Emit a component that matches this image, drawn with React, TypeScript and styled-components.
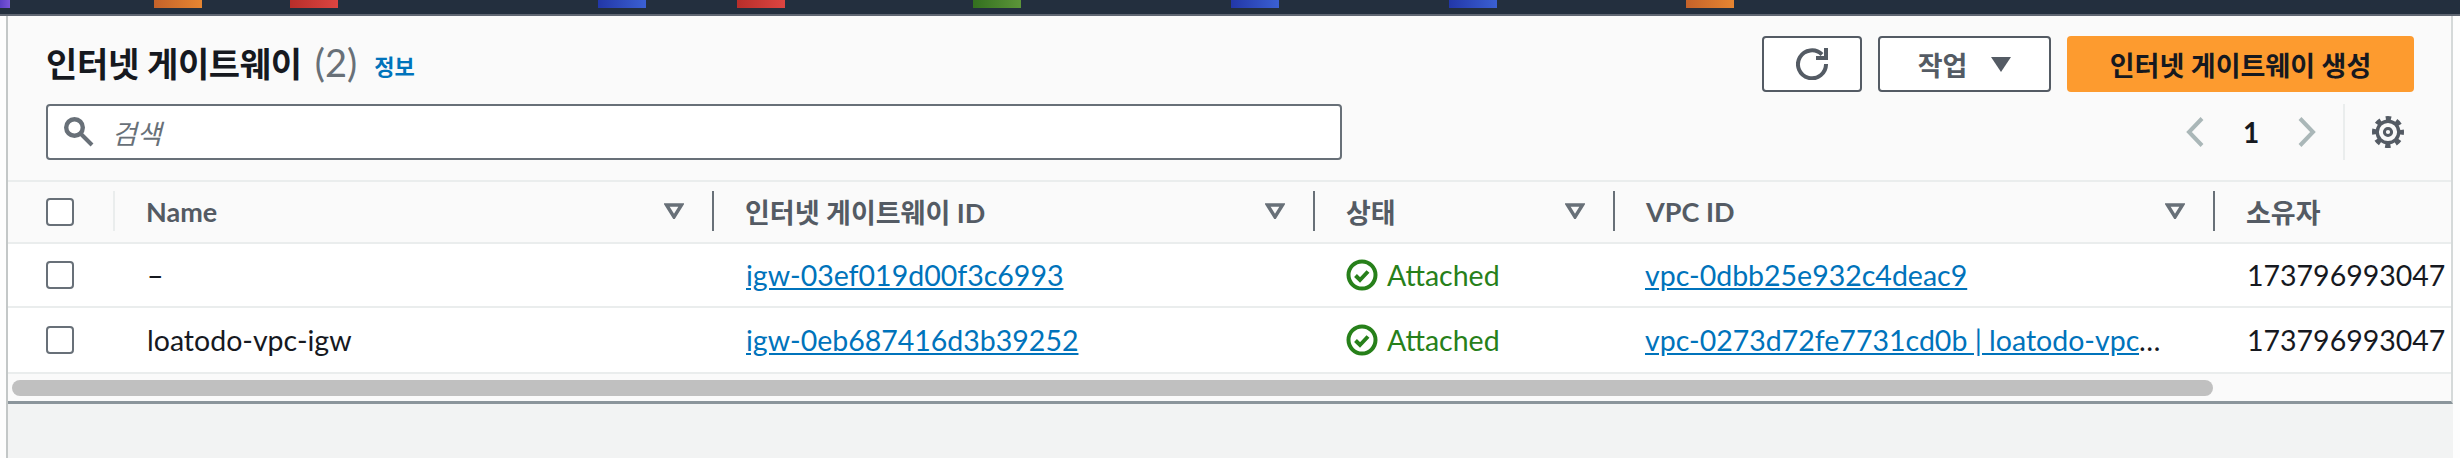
import { FC } from 'react'
import styled, { createGlobalStyle } from 'styled-components'

const GlobalStyle = createGlobalStyle`
  html, body {
    margin: 0;
    padding: 0;
    background: #fdfdfd;
  }
  body {
    font-family: 'Lato', 'Noto Sans CJK KR', sans-serif;
    color: #16191f;
  }
`

const tabs = [
  { gap: 0, width: 10, from: '#5b3fc4', to: '#7a55d8' },
  { gap: 144, width: 48, from: '#c4622a', to: '#e68531' },
  { gap: 88, width: 48, from: '#b72e2a', to: '#dd4541' },
  { gap: 260, width: 48, from: '#2237a8', to: '#3b60d2' },
  { gap: 91, width: 48, from: '#b72e2a', to: '#dd4541' },
  { gap: 188, width: 48, from: '#33701f', to: '#5c9539' },
  { gap: 210, width: 48, from: '#2237a8', to: '#3b60d2' },
  { gap: 170, width: 48, from: '#2237a8', to: '#3b60d2' },
  { gap: 189, width: 48, from: '#c4622a', to: '#e68531' },
]

const SortIcon: FC = () => (
  <SortSvg viewBox="0 0 20 16">
    <path d="M2.5 2h15L10 14z" fill="none" stroke="#687078" strokeWidth="3.4" strokeLinejoin="miter" />
  </SortSvg>
)

const StatusIcon: FC = () => (
  <StatusSvg viewBox="0 0 32 32">
    <circle cx="16" cy="16" r="13.5" fill="none" stroke="#27801a" strokeWidth="4" />
    <path d="M9.5 16.500l4.500 4.500 8-8.500" fill="none" stroke="#27801a" strokeWidth="4" />
  </StatusSvg>
)

const rows = [
  {
    name: '–',
    igw: 'igw-03ef019d00f3c6993',
    vpc: 'vpc-0dbb25e932c4deac9',
    height: 64,
  },
  {
    name: 'loatodo-vpc-igw',
    igw: 'igw-0eb687416d3b39252',
    vpc: 'vpc-0273d72fe7731cd0b | loatodo-vpc-main',
    height: 66,
  },
]

const App: FC = () => {
  return (
    <Page>
      <GlobalStyle />
      <TopBar>
        {tabs.map((t, i) => (
          <Tab key={i} $gap={t.gap} $width={t.width} $from={t.from} $to={t.to} />
        ))}
      </TopBar>
      <Content>
        <Panel>
          <PanelHeader>
            <HeaderLeft>
              <TitleRow>
                <Title>인터넷 게이트웨이</Title>
                <Count>(2)</Count>
                <InfoLink>정보</InfoLink>
              </TitleRow>
              <SearchBox>
                <svg width="30" height="30" viewBox="0 0 30 30">
                  <circle cx="10.500" cy="10.500" r="8.300" fill="none" stroke="#687078" strokeWidth="4.400" />
                  <path d="M16.500 16.500L28 28" fill="none" stroke="#687078" strokeWidth="4" />
                </svg>
                <Placeholder>검색</Placeholder>
              </SearchBox>
            </HeaderLeft>
            <HeaderRight>
              <Actions>
                <IconButton aria-label="refresh">
                  <svg width="32" height="32" viewBox="0 0 32 32">
                    <path d="M26 6.500A14 14 0 1 0 30 16" fill="none" stroke="#545b64" strokeWidth="4" />
                    <path d="M32 0v12H20V8h8V0z" fill="#545b64" />
                  </svg>
                </IconButton>
                <DropButton>
                  작업
                  <svg width="20" height="15" viewBox="0 0 20 15">
                    <path d="M0 0h20L10 15z" fill="#545b64" />
                  </svg>
                </DropButton>
                <PrimaryButton>인터넷 게이트웨이 생성</PrimaryButton>
              </Actions>
              <Pager>
                <svg width="18" height="30" viewBox="0 0 18 30">
                  <path d="M16 1.500L3 15l13 13.500" fill="none" stroke="#aab7b8" strokeWidth="4" />
                </svg>
                <PageNumber>1</PageNumber>
                <svg width="18" height="30" viewBox="0 0 18 30">
                  <path d="M2 1.500L15 15 2 28.500" fill="none" stroke="#aab7b8" strokeWidth="4" />
                </svg>
                <PagerDivider />
                <svg width="32" height="32" viewBox="0 0 32 32">
                  <circle
                    cx="16"
                    cy="16"
                    r="13.800"
                    fill="none"
                    stroke="#545b64"
                    strokeWidth="4.400"
                    strokeDasharray="5.420 5.420"
                    strokeDashoffset="2.710"
                  />
                  <circle cx="16" cy="16" r="10.800" fill="none" stroke="#545b64" strokeWidth="3.400" />
                  <circle cx="16" cy="16" r="3.600" fill="none" stroke="#545b64" strokeWidth="3" />
                </svg>
              </Pager>
            </HeaderRight>
          </PanelHeader>

          <HeadRow>
            <CheckCell>
              <Checkbox />
            </CheckCell>
            <HeadCell $light>
              <HeadLabel>Name</HeadLabel>
              <SortIcon />
            </HeadCell>
            <HeadCell>
              <HeadLabel>인터넷 게이트웨이 ID</HeadLabel>
              <SortIcon />
            </HeadCell>
            <HeadCell>
              <HeadLabel>상태</HeadLabel>
              <SortIcon />
            </HeadCell>
            <HeadCell>
              <HeadLabel>VPC ID</HeadLabel>
              <SortIcon />
            </HeadCell>
            <HeadCell>
              <HeadLabel>소유자</HeadLabel>
            </HeadCell>
          </HeadRow>

          {rows.map((row) => (
            <BodyRow key={row.igw} $height={row.height}>
              <CheckCell>
                <Checkbox />
              </CheckCell>
              <BodyCell $pad={34}>{row.name}</BodyCell>
              <BodyCell $pad={34}>
                <TableLink>{row.igw}</TableLink>
              </BodyCell>
              <BodyCell $pad={33}>
                <Status>
                  <StatusIcon />
                  Attached
                </Status>
              </BodyCell>
              <BodyCell $pad={32}>
                <TableLink>{row.vpc}</TableLink>
              </BodyCell>
              <BodyCell $pad={34} $last>
                173796993047
              </BodyCell>
            </BodyRow>
          ))}

          <ScrollTrack>
            <ScrollThumb />
          </ScrollTrack>
        </Panel>
      </Content>
    </Page>
  )
}

export default App

const Page = styled('div')`
  width: 2460px;
  height: 458px;
  display: flex;
  flex-direction: column;
  overflow: hidden;
`

const TopBar = styled('div')`
  height: 16px;
  box-sizing: border-box;
  flex: none;
  display: flex;
  align-items: flex-start;
  background: #232f3e;
  border-bottom: 2px solid #5f6672;
`

const Tab = styled('div')<{ $gap: number; $width: number; $from: string; $to: string }>`
  height: 8px;
  width: ${({ $width }) => $width}px;
  margin-left: ${({ $gap }) => $gap}px;
  background: linear-gradient(90deg, ${({ $from }) => $from}, ${({ $to }) => $to});
`

const Content = styled('div')`
  flex: 1;
  width: 2447px;
  margin-left: 6px;
  box-sizing: border-box;
  background: #f2f3f3;
  border-left: 2px solid #c3c7c7;
`

const Panel = styled('div')`
  height: 388px;
  box-sizing: border-box;
  background: #fafafa;
  border-right: 2px solid #d5d9d9;
  border-bottom: 3px solid #8b959b;
`

const PanelHeader = styled('div')`
  height: 166px;
  display: flex;
  justify-content: space-between;
  box-sizing: border-box;
  padding: 20px 37px 0 38px;
  border-bottom: 2px solid #eaeded;
`

const HeaderLeft = styled('div')`
  display: flex;
  flex-direction: column;
`

const TitleRow = styled('div')`
  height: 52px;
  margin-bottom: 16px;
  display: flex;
  align-items: center;
`

const Title = styled('h1')`
  margin: 0;
  font-size: 34px;
  font-weight: 700;
  color: #16191f;
  letter-spacing: -0.3px;
`

const Count = styled('span')`
  margin-left: 13px;
  font-size: 38px;
  color: #687078;
`

const InfoLink = styled('a')`
  margin: 6px 0 0 17px;
  font-size: 22px;
  font-weight: 700;
  color: #0073bb;
`

const SearchBox = styled('div')`
  width: 1296px;
  height: 56px;
  box-sizing: border-box;
  display: flex;
  align-items: center;
  gap: 18px;
  padding-left: 16px;
  background: #ffffff;
  border: 2px solid #687078;
  border-radius: 4px;
`

const Placeholder = styled('span')`
  font-size: 27px;
  font-style: italic;
  color: #687078;
`

const HeaderRight = styled('div')`
  display: flex;
  flex-direction: column;
  align-items: flex-end;
  gap: 12px;
`

const Actions = styled('div')`
  display: flex;
  gap: 16px;
`

const BaseButton = styled('button')`
  height: 56px;
  box-sizing: border-box;
  display: flex;
  align-items: center;
  justify-content: center;
  padding: 0;
  border-radius: 4px;
  font-family: inherit;
  font-size: 27px;
  font-weight: 700;
`

const IconButton = styled(BaseButton)`
  width: 100px;
  background: #ffffff;
  border: 2px solid #545b64;
`

const DropButton = styled(BaseButton)`
  width: 173px;
  gap: 24px;
  color: #545b64;
  background: #ffffff;
  border: 2px solid #545b64;
`

const PrimaryButton = styled(BaseButton)`
  width: 347px;
  color: #16191f;
  background: #fd9b2f;
  border: none;
`

const Pager = styled('div')`
  height: 56px;
  display: flex;
  align-items: center;
  padding-right: 10px;
`

const PageNumber = styled('span')`
  width: 94px;
  text-align: center;
  font-size: 28px;
  font-weight: 700;
  color: #16191f;
`

const PagerDivider = styled('div')`
  width: 2px;
  height: 56px;
  margin: 0 27px;
  background: #eaeded;
`

const columns = '105px 599px 601px 300px 600px 240px'

const HeadRow = styled('div')`
  height: 62px;
  box-sizing: border-box;
  display: grid;
  grid-template-columns: ${columns};
  align-items: center;
  border-bottom: 2px solid #eaeded;
`

const BodyRow = styled('div')<{ $height: number }>`
  height: ${({ $height }) => $height}px;
  box-sizing: border-box;
  display: grid;
  grid-template-columns: ${columns};
  align-items: center;
  background: #ffffff;
  border-bottom: 2px solid #eaeded;
`

const CheckCell = styled('div')`
  padding-left: 38px;
  display: flex;
`

const Checkbox = styled('span')`
  width: 28px;
  height: 28px;
  box-sizing: border-box;
  background: #ffffff;
  border: 2px solid #687078;
  border-radius: 4px;
`

const HeadCell = styled('div')<{ $light?: boolean }>`
  height: 40px;
  margin-top: -2px;
  box-sizing: border-box;
  display: flex;
  align-items: center;
  justify-content: space-between;
  padding: 0 28px 0 31px;
  border-left: 2px solid ${({ $light }) => ($light ? '#eaeded' : '#687078')};
`

const HeadLabel = styled('span')`
  font-size: 27px;
  font-weight: 700;
  color: #545b64;
`

const SortSvg = styled('svg')`
  width: 20px;
  height: 16px;
  flex: none;
`

const BodyCell = styled('div')<{ $pad: number; $last?: boolean }>`
  padding: 0 ${({ $last }) => ($last ? '0' : '44px')} 0 ${({ $pad }) => $pad}px;
  font-size: 28.5px;
  color: #16191f;
  white-space: nowrap;
  overflow: hidden;
  text-overflow: ${({ $last }) => ($last ? 'clip' : 'ellipsis')};
`

const TableLink = styled('a')`
  color: #0073bb;
  text-decoration: underline;
`

const Status = styled('span')`
  display: flex;
  align-items: center;
  gap: 9px;
  color: #27801a;
`

const StatusSvg = styled('svg')`
  width: 32px;
  height: 32px;
  flex: none;
`

const ScrollTrack = styled('div')`
  height: 26px;
  box-sizing: border-box;
  padding: 6px 0 0 4px;
`

const ScrollThumb = styled('div')`
  width: 2201px;
  height: 16px;
  border-radius: 8px;
  background: #c0c0c0;
`
